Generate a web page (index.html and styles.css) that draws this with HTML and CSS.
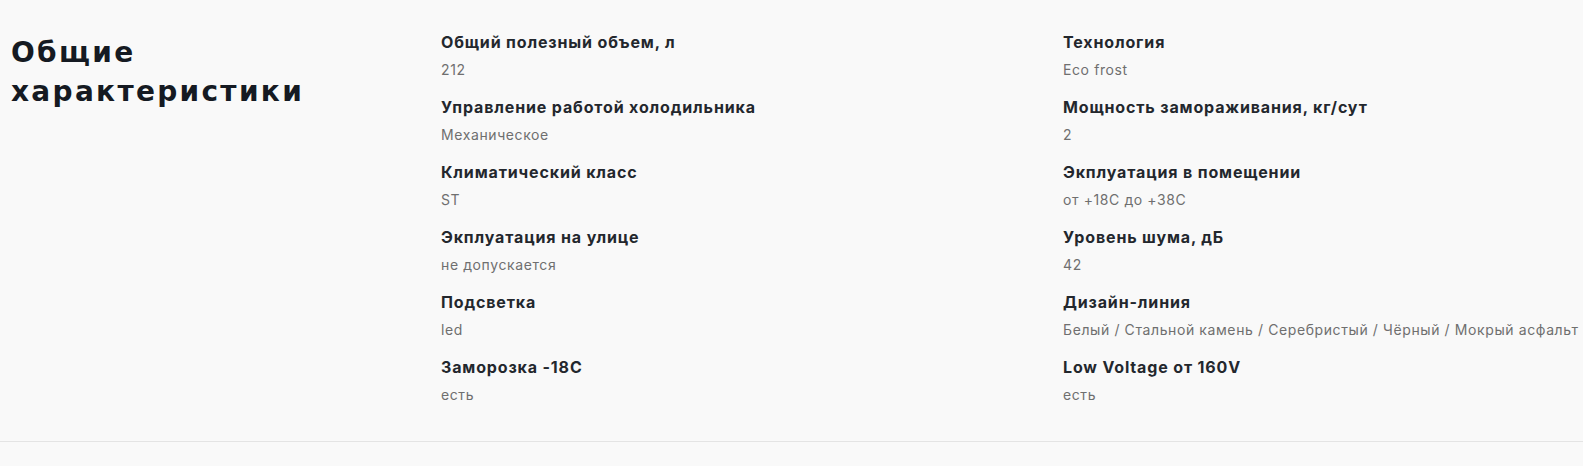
FILE: index.html
```html
<!DOCTYPE html>
<html lang="ru">
<head>
<meta charset="utf-8">
<link rel="stylesheet" href="styles.css">
</head>
<body>
<section class="specs">
  <h2 class="specs-title">Общие характеристики</h2>
  <div class="specs-grid">
    <div class="spec"><div class="spec-label">Общий полезный объем, л</div><div class="spec-value">212</div></div>
    <div class="spec"><div class="spec-label">Технология</div><div class="spec-value">Eco frost</div></div>
    <div class="spec"><div class="spec-label">Управление работой холодильника</div><div class="spec-value">Механическое</div></div>
    <div class="spec"><div class="spec-label">Мощность замораживания, кг/сут</div><div class="spec-value">2</div></div>
    <div class="spec"><div class="spec-label">Климатический класс</div><div class="spec-value">ST</div></div>
    <div class="spec"><div class="spec-label">Экплуатация в помещении</div><div class="spec-value">от +18С до +38С</div></div>
    <div class="spec"><div class="spec-label">Экплуатация на улице</div><div class="spec-value">не допускается</div></div>
    <div class="spec"><div class="spec-label">Уровень шума, дБ</div><div class="spec-value">42</div></div>
    <div class="spec"><div class="spec-label">Подсветка</div><div class="spec-value">led</div></div>
    <div class="spec"><div class="spec-label">Дизайн-линия</div><div class="spec-value">Белый / Стальной камень / Серебристый / Чёрный / Мокрый асфальт</div></div>
    <div class="spec"><div class="spec-label">Заморозка -18С</div><div class="spec-value">есть</div></div>
    <div class="spec"><div class="spec-label">Low Voltage от 160V</div><div class="spec-value">есть</div></div>
  </div>
</section>
</body>
</html>
```

FILE: styles.css
```css
html, body {
  margin: 0;
  padding: 0;
  background: #f9f9f9;
}
body {
  font-family: Inter, "Noto Sans", sans-serif;
  color: #1d2127;
}
.specs {
  display: grid;
  grid-template-columns: 430px 1fr;
  align-items: start;
  padding: 26px 0 0 11px;
  border-bottom: 1px solid #e4e4e4;
  height: 442px;
  box-sizing: border-box;
}
.specs-title {
  margin: 7px 0 0;
  font-family: "DejaVu Sans", Inter, sans-serif;
  font-size: 28px;
  line-height: 39px;
  font-weight: 700;
  letter-spacing: 2.3px;
  color: #151a22;
  width: 330px;
}
.specs-grid {
  display: grid;
  grid-template-columns: 622px 1fr;
  grid-auto-rows: 65px;
  padding-top: 4px;
  white-space: nowrap;
}
.spec-label {
  font-size: 16px;
  line-height: 24px;
  font-weight: 700;
  letter-spacing: 0.85px;
  color: #23272d;
}
.spec-value {
  margin-top: 6px;
  font-size: 14px;
  line-height: 20px;
  letter-spacing: 0.6px;
  color: #6f6f6f;
}
```
